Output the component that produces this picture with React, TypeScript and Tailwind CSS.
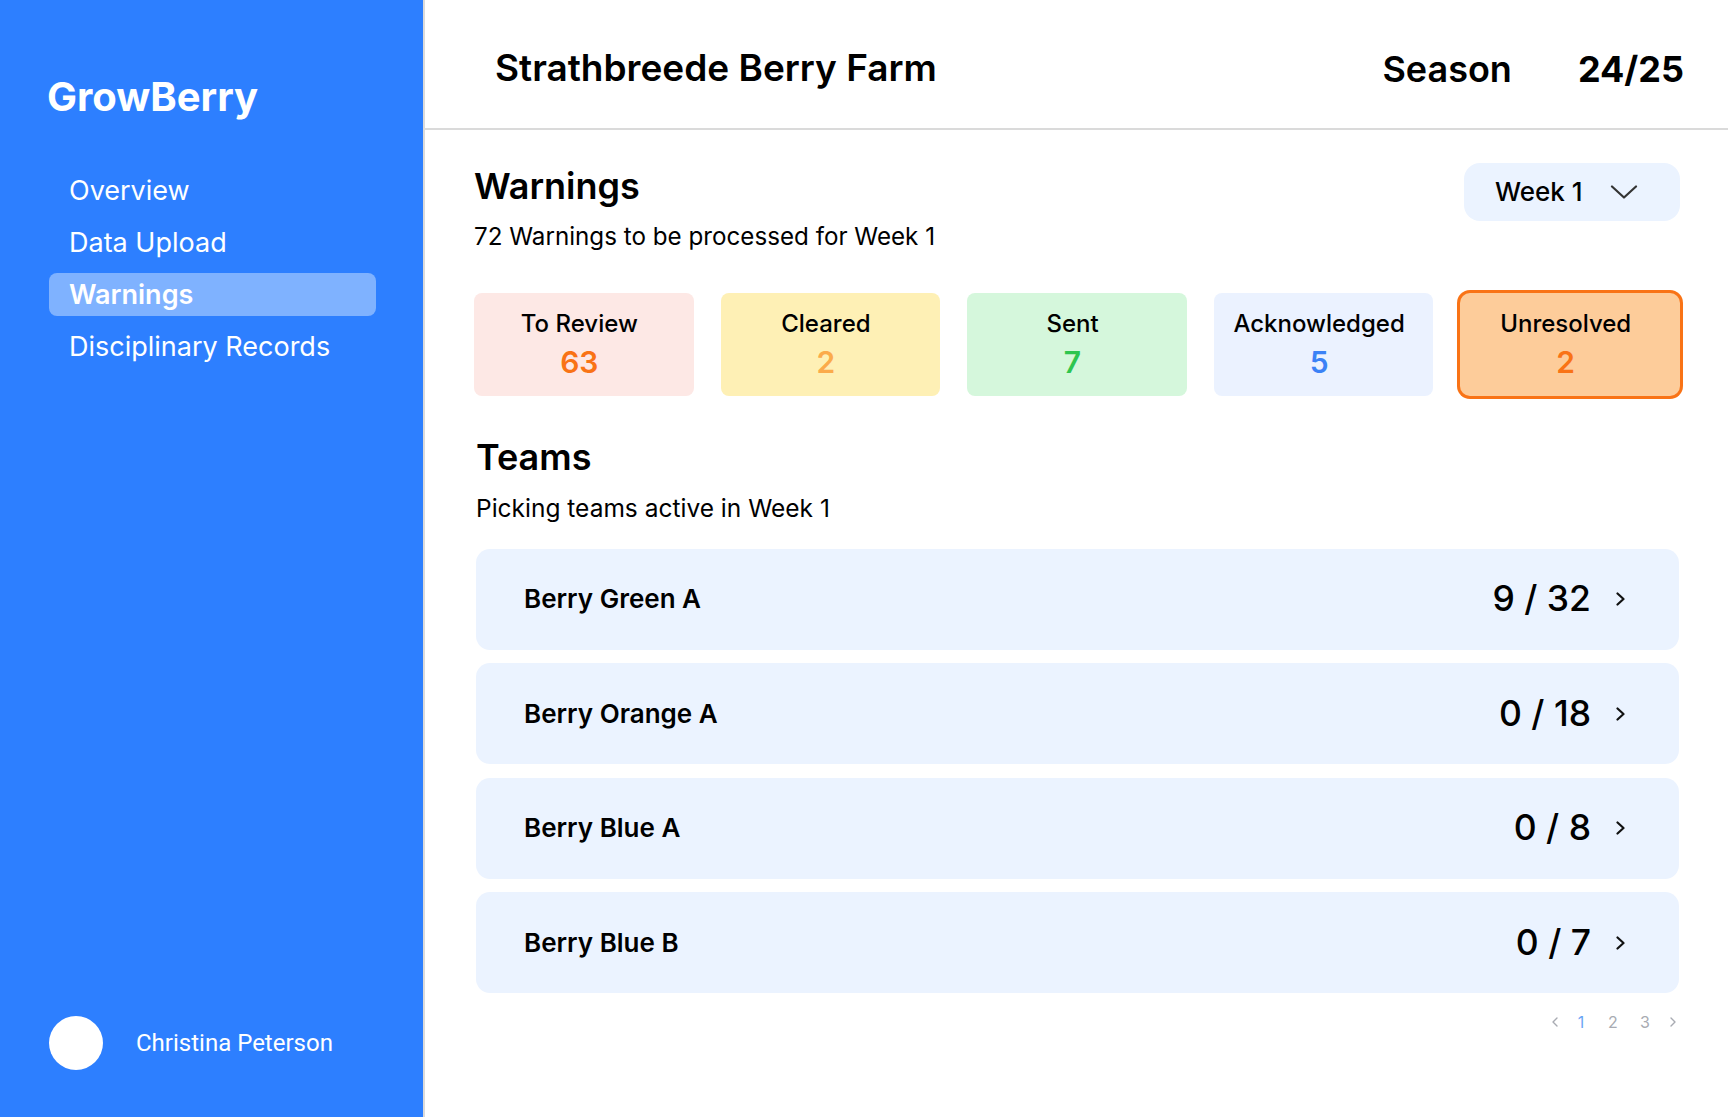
import React from "react"

const navItems = ["Overview", "Data Upload", "Warnings", "Disciplinary Records"]

const stats = [
  { label: "To Review", value: "63", card: "bg-[#fde8e5]", num: "text-[#f97316]" },
  { label: "Cleared", value: "2", card: "bg-[#fef0b5]", num: "text-[#fbab4b]" },
  { label: "Sent", value: "7", card: "bg-[#d5f7dc]", num: "text-[#2ec54f]" },
  { label: "Acknowledged", value: "5", card: "bg-[#ebf2ff]", num: "text-[#3b82f6]" },
  {
    label: "Unresolved",
    value: "2",
    card: "bg-[#fdcc9a] ring-[3px] ring-[#f97316] rounded-[10px]",
    num: "text-[#f97316]",
  },
]

const teams = [
  { name: "Berry Green A", count: "9 / 32" },
  { name: "Berry Orange A", count: "0 / 18" },
  { name: "Berry Blue A", count: "0 / 8" },
  { name: "Berry Blue B", count: "0 / 7" },
]

function Sidebar() {
  return (
    <aside className="flex h-full w-[425px] shrink-0 flex-col border-r-2 border-[#dadada] bg-[#2d7fff] pl-[49px] text-white">
      <div className="mt-[77px] -ml-[2px] text-[40px] font-bold leading-none">GrowBerry</div>
      <nav className="mt-[52px] flex w-[327px] flex-col gap-[9px]">
        {navItems.map((item) => {
          const active = item === "Warnings"
          return (
            <div
              key={item}
              className={
                active
                  ? "flex h-[43px] items-center rounded-[8px] bg-[#7fb2ff] px-[20px] text-[27px] font-semibold leading-none"
                  : "flex h-[43px] items-center px-[20px] text-[27px] leading-none"
              }
            >
              {item}
            </div>
          )
        })}
      </nav>
      <div className="mt-auto flex items-center pb-[47px]">
        <div className="h-[54px] w-[54px] rounded-full bg-white" />
        <span className="ml-[33px] font-['Roboto',sans-serif] text-[24px] leading-none text-white">
          Christina Peterson
        </span>
      </div>
    </aside>
  )
}

function Header() {
  return (
    <header className="flex h-[130px] shrink-0 items-center border-b-2 border-[#dadada] pl-[70px] pr-[44px] pt-[7px]">
      <h1 className="text-[37px] font-semibold leading-none text-black">Strathbreede Berry Farm</h1>
      <div className="ml-auto mt-[3px] flex items-center gap-[66px] text-[36px] leading-none text-black">
        <span className="font-semibold">Season</span>
        <span className="font-bold">24/25</span>
      </div>
    </header>
  )
}

function WeekSelect() {
  return (
    <button className="-mt-[5px] flex h-[58px] w-[216px] items-center gap-[27px] rounded-[16px] bg-[#ebf3ff] pl-[31px] text-[26px] font-medium leading-none text-black">
      Week 1
      <svg width="28" height="14" viewBox="0 0 28 14" fill="none">
        <polyline points="2,1.5 14,12.5 26,1.5" stroke="#333" strokeWidth="2.2" strokeLinecap="round" strokeLinejoin="round" />
      </svg>
    </button>
  )
}

function SmallChevron({ dir }: { dir: "left" | "right" }) {
  return (
    <svg width="6" height="10" viewBox="0 0 6 10" fill="none">
      <polyline
        points={dir === "left" ? "5,1 1,5 5,9" : "1,1 5,5 1,9"}
        stroke="#a8abb2"
        strokeWidth="1.4"
        strokeLinecap="round"
        strokeLinejoin="round"
      />
    </svg>
  )
}

function Content() {
  return (
    <div className="flex flex-col pl-[49px] pr-[48px] pt-[38px]">
      <div className="flex items-start justify-between">
        <div>
          <h2 className="text-[36px] font-semibold leading-none text-black">Warnings</h2>
          <p className="mt-[21px] text-[24.2px] leading-none text-black">72 Warnings to be processed for Week 1</p>
        </div>
        <WeekSelect />
      </div>

      <div className="mt-[44px] grid grid-cols-5 gap-[27px]">
        {stats.map((s) => (
          <div
            key={s.label}
            className={`flex h-[103px] flex-col items-center rounded-[8px] pr-[9px] pt-[19px] ${s.card}`}
          >
            <span className="text-[24px] font-medium leading-none text-black">{s.label}</span>
            <span className={`mt-[11px] text-[30px] font-semibold leading-none ${s.num}`}>{s.value}</span>
          </div>
        ))}
      </div>

      <div className="ml-[2px] mr-[1px] mt-[43px]">
        <h2 className="text-[36px] font-semibold leading-none text-black">Teams</h2>
        <p className="mt-[21px] text-[24.5px] leading-none text-black">Picking teams active in Week 1</p>

        <div className="mt-[28px] flex flex-col gap-[13.5px]">
          {teams.map((t) => (
            <div key={t.name} className="flex h-[101px] items-center rounded-[14px] bg-[#ebf3ff] pl-[48px] pr-[54px]">
              <span className="text-[26px] font-semibold leading-none text-black">{t.name}</span>
              <span className="ml-auto text-[35.5px] font-medium leading-none text-black">{t.count}</span>
              <svg className="ml-[25px]" width="9" height="14" viewBox="0 0 9 14" fill="none">
                <polyline points="1.5,1.5 7.5,7 1.5,12.5" stroke="#111" strokeWidth="2.2" strokeLinecap="round" strokeLinejoin="round" />
              </svg>
            </div>
          ))}
        </div>
      </div>

      <div className="-mr-[5px] mt-[21px] flex items-center justify-end text-[16px] leading-none">
        <span className="flex w-[20px] justify-center"><SmallChevron dir="left" /></span>
        <span className="flex w-[32px] justify-center text-[#6aa5f5]">1</span>
        <span className="flex w-[32px] justify-center text-[#a8abb2]">2</span>
        <span className="flex w-[32px] justify-center text-[#a8abb2]">3</span>
        <span className="flex w-[24px] justify-center"><SmallChevron dir="right" /></span>
      </div>
    </div>
  )
}

export default function App() {
  return (
    <div className="flex h-[1117px] w-full overflow-hidden bg-white font-['Inter',sans-serif]">
      <Sidebar />
      <main className="flex min-w-0 flex-1 flex-col">
        <Header />
        <Content />
      </main>
    </div>
  )
}
